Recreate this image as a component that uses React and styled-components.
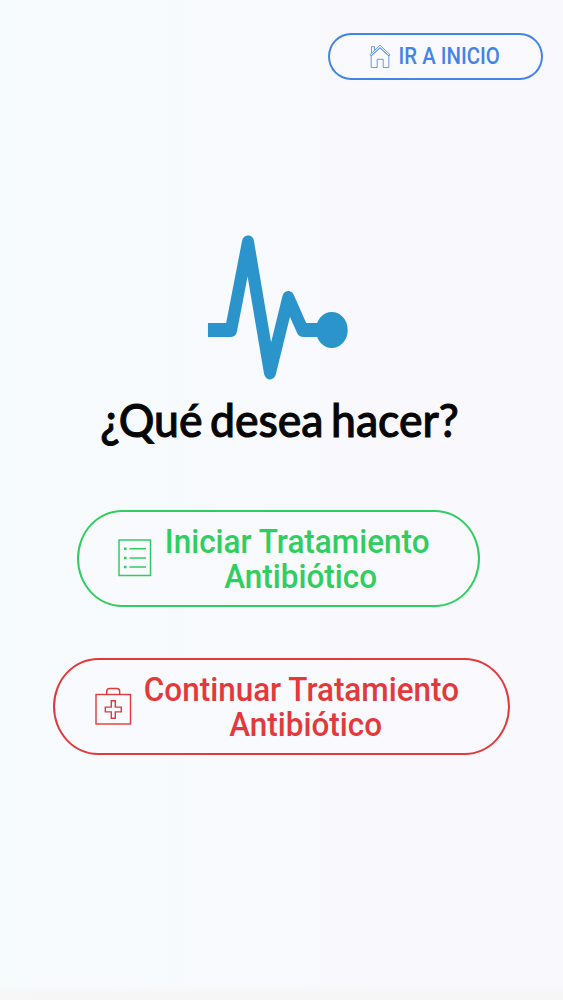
import React from 'react';
import styled, { createGlobalStyle } from 'styled-components';

const GlobalStyle = createGlobalStyle`
	body {
		margin: 0;
	}
	*, *::before, *::after {
		box-sizing: border-box;
	}
`;

const Screen = styled.main`
	display: flex;
	flex-direction: column;
	align-items: center;
	height: 1000px;
	padding-top: 33px;
	overflow: hidden;
	background:
		linear-gradient(to bottom, rgba(246, 246, 246, 0) 986px, #f6f6f6 994px),
		linear-gradient(to right, #f6fbfc 0, #f7fafc 180px, #f9f9fd 330px, #f8f8fd 100%);
`;

const Button = styled.button`
	display: flex;
	flex-shrink: 0;
	align-items: center;
	border: 2px solid currentColor;
	background: rgba(250, 250, 254, 0.6);
	font-family: Roboto, sans-serif;
	font-weight: 500;
`;

const HomeButton = styled(Button)`
	align-self: flex-end;
	width: 215px;
	height: 47px;
	margin-right: 20px;
	padding: 0 0 1px 39px;
	border-radius: 23px / 23.5px;
	color: #4484e4;
`;

const ActionButton = styled(Button)`
	width: ${({ $width }) => $width}px;
	height: 97px;
	margin: ${({ $margin }) => $margin};
	padding: 0 0 0 ${({ $pad }) => $pad}px;
	border-radius: 45px / 48.5px;
	color: ${({ $color }) => $color};

	svg {
		margin-bottom: 2px;
	}
`;

const Label = styled.span`
	display: flex;
	flex-direction: column;
	align-items: center;
	width: ${({ $width }) => $width}px;
	margin-left: ${({ $gap }) => $gap}px;
	font-size: ${({ $size }) => $size}px;
	line-height: ${({ $line }) => $line}px;
`;

const Line = styled.span`
	white-space: nowrap;
	transform: scaleX(${({ $stretch }) => $stretch || 0.925});
	margin-left: ${({ $shift }) => $shift || 0}px;
`;

const Pulse = styled.svg`
	flex-shrink: 0;
	margin: 155px 8px 0 0;
`;

const Title = styled.h1`
	display: flex;
	flex-shrink: 0;
	justify-content: center;
	width: 563px;
	height: 60px;
	margin: 8px 0 2px -4px;
	color: #060606;
	font-family: Lato, sans-serif;
	font-size: 47px;
	font-weight: 500;
	line-height: 60px;
	word-spacing: -4px;
	-webkit-text-stroke: 1px #060606;
`;

const HomeIcon = () => (
	<svg width="22" height="25" viewBox="0 0 22 25" fill="none" stroke="currentColor" strokeWidth="0.8">
		<path d="M2.2 12v11.5h6V15.3h6v8.2h5.6V12L11 3.8z" />
		<path d="M1 10.7 11 1.2l10 9.5-1 1.2L11 3.8 2 11.9z" />
		<path d="M2.5 9.2V2.7h3v3.6" />
	</svg>
);

const ListIcon = () => (
	<svg width="34" height="38" viewBox="0 0 34 38" fill="none" stroke="currentColor" strokeWidth="1.5">
		<rect x="1" y="1" width="31.5" height="35.5" />
		<path d="M11.5 9.7H28M11.5 19H28M11.5 28H28" />
		<path d="M6 9.7h2.5M6 19h2.5M6 28h2.5" strokeWidth="2.6" />
	</svg>
);

const KitIcon = () => (
	<svg width="37" height="38" viewBox="0 0 37 38" fill="none" stroke="currentColor" strokeWidth="1.4">
		<rect x="1" y="7.5" width="34.5" height="29.5" />
		<path d="M11.7 7.5V4.5q0-3 3-3h7q3 0 3 3v3" />
		<path d="M16.3 13.8h4v6.3h6v4.8h-6v6.3h-4v-6.3h-6v-4.8h6z" />
	</svg>
);

const App = () => {
	return (
		<>
			<GlobalStyle />
			<Screen>
				<HomeButton>
					<HomeIcon />
					<Label $size={23} $line={27} $width={101} $gap={8}>
						<Line $stretch={0.885}>IR A INICIO</Line>
					</Label>
				</HomeButton>

				<Pulse width="147" height="146" viewBox="0 0.5 147 146">
					<path
						d="M4.5 95.5H30.7L50 7.8 75 138 95.8 63.3 112 95.5h32"
						transform="scale(0.88 1)"
						fill="none"
						stroke="#2b95cb"
						strokeWidth="13.8"
						strokeLinejoin="round"
					/>
					<ellipse cx="127.8" cy="95.5" rx="15.9" ry="18" fill="#2b95cb" />
				</Pulse>

				<Title>
					<Line $stretch={0.946}>¿Qué desea hacer?</Line>
				</Title>

				<ActionButton $width={403} $color="#30ce60" $margin="59px 6px 0 0" $pad={39}>
					<ListIcon />
					<Label $size={34} $line={35} $width={266} $gap={12}>
						<Line>Iniciar Tratamiento</Line>
						<Line $shift={7}>Antibiótico</Line>
					</Label>
				</ActionButton>

				<ActionButton $width={457} $color="#e23a3c" $margin="51px 0 0" $pad={40}>
					<KitIcon />
					<Label $size={34} $line={35} $width={316} $gap={11}>
						<Line>Continuar Tratamiento</Line>
						<Line $shift={9}>Antibiótico</Line>
					</Label>
				</ActionButton>
			</Screen>
		</>
	);
};

export default App;
